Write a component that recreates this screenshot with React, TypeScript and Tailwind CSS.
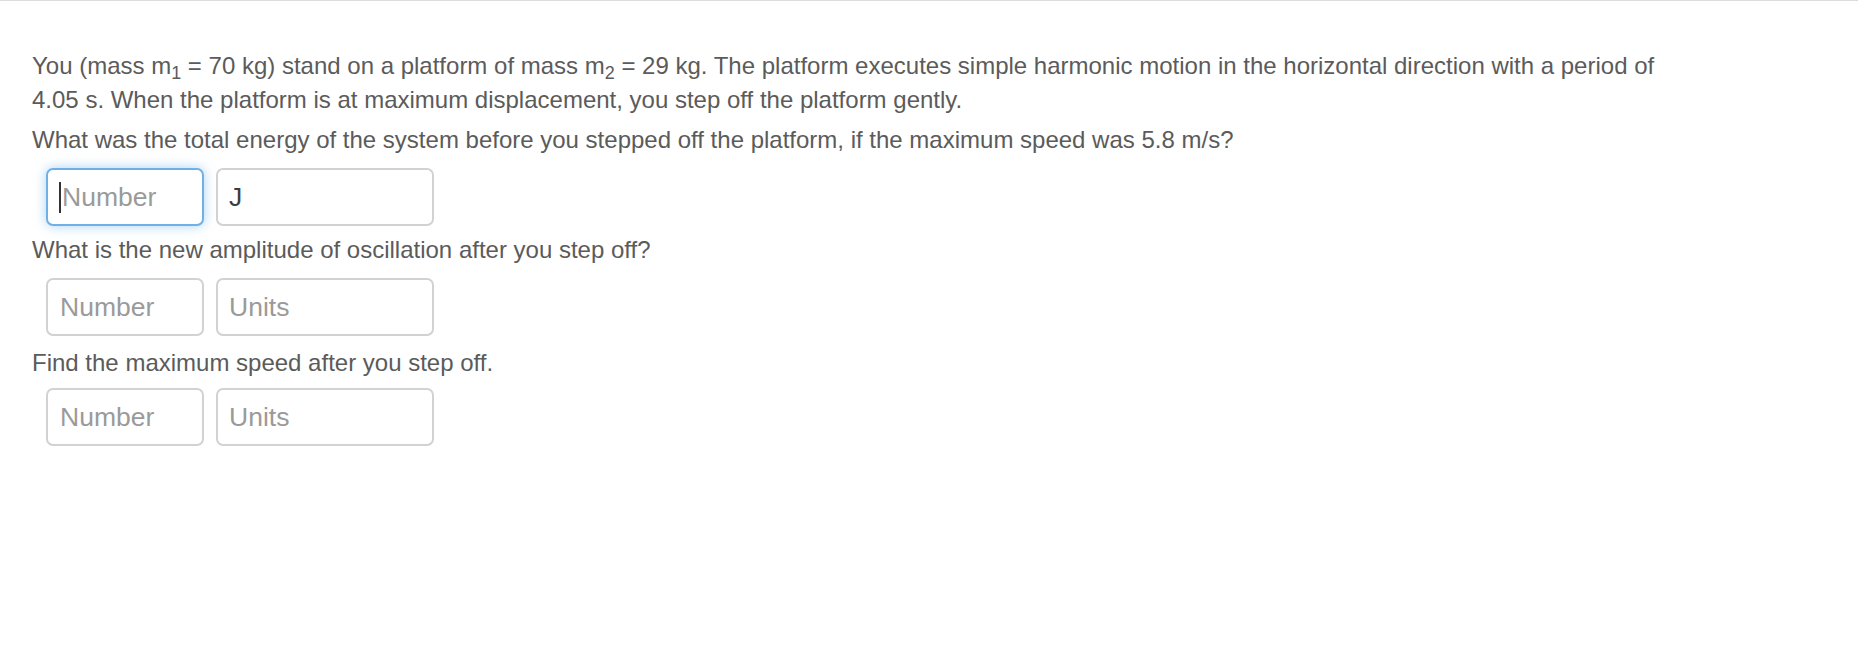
import React from 'react'

const font = { fontFamily: '"Liberation Sans", Arial, Helvetica, sans-serif' }

interface IAnswerRow {
    unit?: string
    focused?: boolean
}

const AnswerRow: React.FC<IAnswerRow> = ({ unit, focused }) => {
    return (
        <div className="flex gap-[12px] pl-[14px]">
            <div
                className={
                    focused
                        ? 'flex items-center w-[158px] h-[58px] pl-[11px] rounded-[7px] border-2 border-[#6fb0e6] bg-white shadow-[0_0_12px_rgba(102,175,233,0.55)]'
                        : 'flex items-center w-[158px] h-[58px] pl-[12px] rounded-[7px] border-2 border-[#d2d2d2] bg-white'
                }
            >
                {focused && <span className="w-[2px] h-[31px] bg-[#333] mr-[1px]" />}
                <span className="text-[26.5px] text-[#9a9a9a]">Number</span>
            </div>
            <div className="flex items-center w-[218px] h-[58px] pl-[11px] rounded-[7px] border-2 border-[#d2d2d2] bg-white">
                {unit ? (
                    <span className="text-[26.5px] text-[#3d3d3d]">{unit}</span>
                ) : (
                    <span className="text-[26.5px] text-[#9a9a9a]">Units</span>
                )}
            </div>
        </div>
    )
}

export default function App() {
    return (
        <div className="w-full min-h-[646px] bg-white border-t border-[#dcdcdc]" style={font}>
            <div className="pl-[32px] pr-[40px] pt-[48px] text-[24px] leading-[34px] text-[#5b5b5b]">
                <p className="max-w-[1650px]">
                    You (mass m<sub>1</sub> = 70 kg) stand on a platform of mass m<sub>2</sub> = 29 kg.
                    The platform executes simple harmonic motion in the horizontal direction with a
                    period of 4.05 s. When the platform is at maximum displacement, you step off the
                    platform gently.
                </p>
                <p className="mt-[6px]">
                    What was the total energy of the system before you stepped off the platform, if
                    the maximum speed was 5.8 m/s?
                </p>
                <div className="mt-[11px]">
                    <AnswerRow unit="J" focused />
                </div>
                <p className="mt-[7px]">What is the new amplitude of oscillation after you step off?</p>
                <div className="mt-[11px]">
                    <AnswerRow />
                </div>
                <p className="mt-[10px]">Find the maximum speed after you step off.</p>
                <div className="mt-[8px]">
                    <AnswerRow />
                </div>
            </div>
        </div>
    )
}
